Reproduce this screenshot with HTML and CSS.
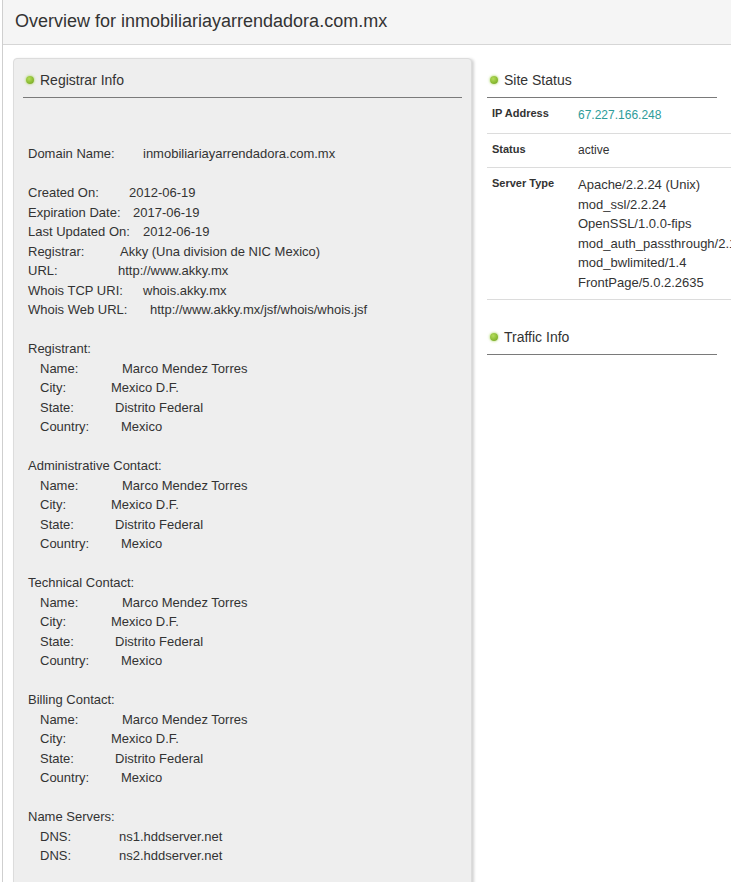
FILE: index.html
```html
<!DOCTYPE html>
<html>
<head>
<meta charset="utf-8">
<title>Overview</title>
<link rel="stylesheet" href="styles.css">
</head>
<body>
<div class="page">
  <header class="topbar">
    <h1 class="title">Overview for inmobiliariayarrendadora.com.mx</h1>
  </header>
  <main class="content">
    <section class="panel">
      <h2 class="heading"><span class="dot"></span>Registrar Info</h2>
      <div class="whois">
        <div class="ln"><span class="k w115">Domain Name:</span>inmobiliariayarrendadora.com.mx</div>
        <div class="gap"></div>
        <div class="ln"><span class="k w101">Created On:</span>2012-06-19</div>
        <div class="ln"><span class="k w105">Expiration Date:</span>2017-06-19</div>
        <div class="ln"><span class="k w115">Last Updated On:</span>2012-06-19</div>
        <div class="ln"><span class="k w92">Registrar:</span>Akky (Una division de NIC Mexico)</div>
        <div class="ln"><span class="k w90">URL:</span>http://www.akky.mx</div>
        <div class="ln"><span class="k w115">Whois TCP URI:</span>whois.akky.mx</div>
        <div class="ln"><span class="k w122">Whois Web URL:</span>http://www.akky.mx/jsf/whois/whois.jsf</div>
        <div class="gap"></div>
        <div class="ln">Registrant:</div>
        <div class="ln sub"><span class="k w82">Name:</span>Marco Mendez Torres</div>
        <div class="ln sub"><span class="k w71">City:</span>Mexico D.F.</div>
        <div class="ln sub"><span class="k w75">State:</span>Distrito Federal</div>
        <div class="ln sub"><span class="k w81">Country:</span>Mexico</div>
        <div class="gap"></div>
        <div class="ln">Administrative Contact:</div>
        <div class="ln sub"><span class="k w82">Name:</span>Marco Mendez Torres</div>
        <div class="ln sub"><span class="k w71">City:</span>Mexico D.F.</div>
        <div class="ln sub"><span class="k w75">State:</span>Distrito Federal</div>
        <div class="ln sub"><span class="k w81">Country:</span>Mexico</div>
        <div class="gap"></div>
        <div class="ln">Technical Contact:</div>
        <div class="ln sub"><span class="k w82">Name:</span>Marco Mendez Torres</div>
        <div class="ln sub"><span class="k w71">City:</span>Mexico D.F.</div>
        <div class="ln sub"><span class="k w75">State:</span>Distrito Federal</div>
        <div class="ln sub"><span class="k w81">Country:</span>Mexico</div>
        <div class="gap"></div>
        <div class="ln">Billing Contact:</div>
        <div class="ln sub"><span class="k w82">Name:</span>Marco Mendez Torres</div>
        <div class="ln sub"><span class="k w71">City:</span>Mexico D.F.</div>
        <div class="ln sub"><span class="k w75">State:</span>Distrito Federal</div>
        <div class="ln sub"><span class="k w81">Country:</span>Mexico</div>
        <div class="gap"></div>
        <div class="ln">Name Servers:</div>
        <div class="ln sub"><span class="k w79">DNS:</span>ns1.hddserver.net</div>
        <div class="ln sub"><span class="k w79">DNS:</span>ns2.hddserver.net</div>
      </div>
    </section>
    <aside class="side">
      <h2 class="heading side-heading"><span class="dot"></span>Site Status</h2>
      <table class="status">
        <tr>
          <th>IP Address</th>
          <td><a class="ip" href="#">67.227.166.248</a></td>
        </tr>
        <tr>
          <th>Status</th>
          <td class="small">active</td>
        </tr>
        <tr>
          <th>Server Type</th>
          <td>Apache/2.2.24 (Unix)<br>mod_ssl/2.2.24<br>OpenSSL/1.0.0-fips<br>mod_auth_passthrough/2.1<br>mod_bwlimited/1.4<br>FrontPage/5.0.2.2635</td>
        </tr>
      </table>
      <h2 class="heading side-heading traffic"><span class="dot"></span>Traffic Info</h2>
    </aside>
  </main>
</div>
</body>
</html>
```

FILE: styles.css
```css
html, body {
  margin: 0;
  padding: 0;
  background: #fff;
  overflow: hidden;
}

body {
  font-family: "Liberation Sans", Arial, sans-serif;
  color: #333;
}

.page {
  margin-left: 2px;
  border-left: 1px solid #cfcfcf;
  min-height: 882px;
}

.topbar {
  height: 44px;
  background: #f5f5f5;
  border-bottom: 1px solid #d6d6d6;
  padding-left: 12px;
  display: flex;
  align-items: center;
}

.title {
  margin: 0;
  font-size: 18px;
  font-weight: normal;
  color: #333;
  line-height: 22px;
  padding-bottom: 2px;
}

.content {
  display: flex;
  align-items: flex-start;
  padding: 13px 0 0 10px;
  gap: 15px;
}

.panel {
  flex: 0 0 auto;
  width: 439px;
  padding: 11px 9px 40px;
  background: #eee;
  border: 1px solid #dcdcdc;
  border-radius: 4px;
  box-shadow: 2px 1px 3px rgba(0, 0, 0, 0.18);
}

.heading {
  margin: 0;
  font-size: 14px;
  font-weight: normal;
  line-height: 20px;
  color: #333;
  padding: 0 3px 7px;
  border-bottom: 1px solid #7a7a7a;
  display: flex;
  align-items: center;
}

.dot {
  display: inline-block;
  width: 8px;
  height: 8px;
  border-radius: 50%;
  margin-right: 6px;
  background: radial-gradient(circle at 40% 35%, #b4dc5a 0%, #8cbd34 55%, #6f9a22 100%);
  box-shadow: 0 0 2px 1px rgba(170, 215, 90, 0.5);
}

.whois {
  margin-top: 46px;
  padding-left: 5px;
  font-size: 13px;
  line-height: 19.5px;
  color: #333;
}

.ln {
  white-space: nowrap;
}

.gap {
  height: 19.5px;
}

.sub {
  padding-left: 12px;
}

.k {
  display: inline-block;
}

.w71 { width: 71px; }
.w75 { width: 75px; }
.w79 { width: 79px; }
.w81 { width: 81px; }
.w82 { width: 82px; }
.w90 { width: 90px; }
.w92 { width: 92px; }
.w101 { width: 101px; }
.w105 { width: 105px; }
.w115 { width: 115px; }
.w122 { width: 122px; }

.side {
  flex: 0 0 auto;
  width: 280px;
  padding-top: 12px;
}

.side-heading {
  width: 224px;
}

.status {
  width: 100%;
  table-layout: fixed;
  border-collapse: collapse;
}

.status th,
.status td {
  padding: 7px 5px 7px;
  line-height: 19.5px;
  border-bottom: 1px solid #dcdcdc;
  vertical-align: top;
  text-align: left;
  white-space: nowrap;
  overflow: hidden;
}

.status th {
  width: 76px;
  font-size: 11px;
  font-weight: bold;
  color: #333;
  padding-top: 6px;
}

.status td {
  font-size: 13px;
  color: #333;
}

.status td.small {
  font-size: 12px;
}

.ip {
  font-size: 12px;
  color: #2e9c9a;
  text-decoration: none;
}

.traffic {
  margin-top: 27px;
}
```
